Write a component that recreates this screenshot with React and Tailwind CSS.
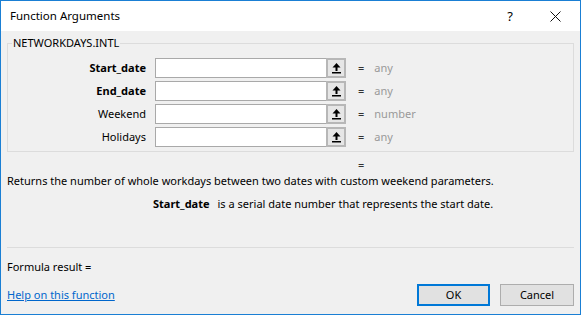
import React from 'react';

const args = [
    { name: 'Start_date', required: true, hint: 'any' },
    { name: 'End_date', required: true, hint: 'any' },
    { name: 'Weekend', required: false, hint: 'number' },
    { name: 'Holidays', required: false, hint: 'any' },
];

function CollapseIcon() {
    return (
        <svg width="9" height="11" viewBox="0 0 9 11">
            <polygon points="4.5,0 0.5,4.5 8.5,4.5" fill="#000" />
            <rect x="3.5" y="4" width="2" height="4" fill="#000" />
            <rect x="0" y="9" width="9" height="1.5" fill="#000" />
        </svg>
    );
}

function ArgRow({ arg }) {
    return (
        <>
            <div className={`text-right leading-[20px] ${arg.required ? 'font-bold' : ''}`}>{arg.name}</div>
            <div className="flex h-[20px] border border-[#a9a9a9] bg-white">
                <div className="flex-1" />
                <div className="w-[20px] h-[20px] -mt-px -mr-px flex items-center justify-center border-2 border-[#b7b7b7] bg-[#e6e6e6]">
                    <CollapseIcon />
                </div>
            </div>
            <div className="flex items-center leading-[20px]">
                <span className="text-[#333]">=</span>
                <span className="ml-[10px] text-[#999]">{arg.hint}</span>
            </div>
        </>
    );
}

export default function App() {
    return (
        <div className="w-[581px] h-[315px] border border-[#1a7fd4] bg-[#f0f0f0] flex flex-col text-[11px] leading-[16px] text-black [font-family:'Noto_Sans',sans-serif]">
            <div className="h-[30px] shrink-0 bg-white flex items-center pl-[9px]">
                <span className="text-[11.5px]">Function Arguments</span>
                <span className="ml-auto mr-[37px] text-[13px]">?</span>
                <svg width="11" height="11" viewBox="0 0 11 11" className="mr-[19px]">
                    <path d="M0.5 0.5 L10.5 10.5 M10.5 0.5 L0.5 10.5" stroke="#111" strokeWidth="1" />
                </svg>
            </div>

            <div className="px-[6px] flex flex-col flex-1">
                <fieldset className="mt-[4px] border border-[#dcdcdc] pt-[7px] pb-[4px]">
                    <legend className="ml-[4px] px-[1px]">NETWORKDAYS.INTL</legend>
                    <div className="grid grid-cols-[138px_191px_1fr] gap-y-[3px] gap-x-[9px] [&>*:nth-child(3n)]:ml-[3px]">
                        {args.map((a) => (
                            <ArgRow key={a.name} arg={a} />
                        ))}
                    </div>
                </fieldset>

                <div className="mt-[5px] pl-[351px] text-[#333]">=</div>
                <div>Returns the number of whole workdays between two dates with custom weekend parameters.</div>
                <div className="mt-[7px] pl-[146px] flex">
                    <span className="font-bold mr-[8px]">Start_date</span>
                    <span>is a serial date number that represents the start date.</span>
                </div>

                <div className="mt-[35px] border-t border-[#dcdcdc]" />

                <div className="mt-[11px]">Formula result =</div>

                <div className="mt-[9px] flex items-center">
                    <a href="#" className="text-[#0066cc] underline">Help on this function</a>
                    <button className="ml-auto w-[73px] h-[22px] border-2 border-[#0078d7] bg-[#e1e1e1]">OK</button>
                    <button className="ml-[10px] w-[74px] h-[22px] border border-[#adadad] bg-[#e1e1e1]">Cancel</button>
                </div>
            </div>
        </div>
    );
}
